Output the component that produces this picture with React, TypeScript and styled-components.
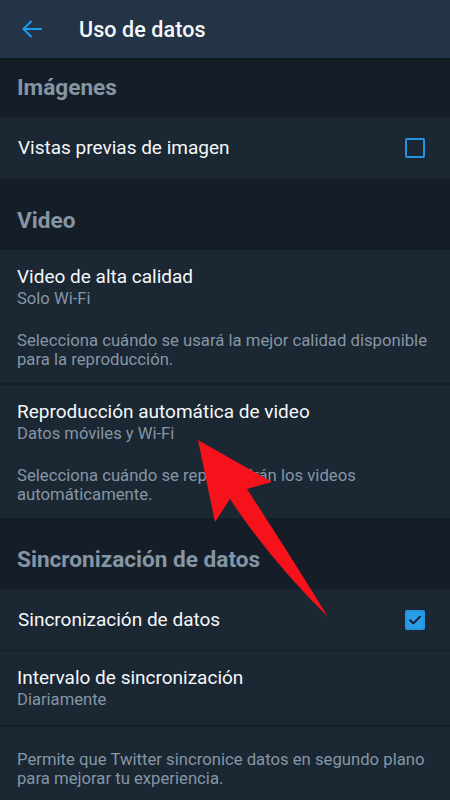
import React from 'react';
import styled, { createGlobalStyle } from 'styled-components';

const GlobalStyle = createGlobalStyle`
  html, body {
    margin: 0;
    padding: 0;
    background: #1b2733;
  }
  * {
    box-sizing: border-box;
  }
`;

const Screen = styled.div`
  position: relative;
  width: 450px;
  height: 800px;
  overflow: hidden;
  background: #1b2733;
  font-family: Roboto, 'Noto Sans', sans-serif;
`;

const TopBar = styled.header`
  height: 58px;
  display: flex;
  align-items: center;
  padding-left: 20px;
  background: #243447;
  box-shadow: 0 2px 3px rgba(0, 0, 0, 0.35);
  position: relative;
  z-index: 1;
`;

const BackButton = styled.button`
  width: 24px;
  height: 24px;
  padding: 0;
  border: none;
  background: none;
  display: flex;
  align-items: center;
  justify-content: center;
  margin-right: 35px;
`;

const TopTitle = styled.h1`
  margin: 0;
  font-size: 21.5px;
  font-weight: 500;
  color: #f5f8fa;
  letter-spacing: 0.1px;
`;

const SectionHeader = styled.div<{ $first?: boolean }>`
  background: #151e28;
  padding: ${({ $first }) => ($first ? '17px 17px 17px' : '29px 17px 17px')};
  font-size: 22.6px;
  font-weight: 700;
  line-height: 25px;
  color: #8595a3;
`;

const Row = styled.div<{ $divider?: boolean }>`
  background: #1b2733;
  padding: 16px 17px 14px 17px;
  border-bottom: ${({ $divider }) => ($divider ? '2px solid #151e28' : 'none')};
`;

const ToggleRow = styled.div<{ $divider?: boolean }>`
  background: #1b2733;
  height: 62px;
  display: flex;
  align-items: center;
  justify-content: space-between;
  padding: 0 25px 0 18px;
  border-bottom: ${({ $divider }) => ($divider ? '1px solid #151e28' : 'none')};
`;

const Title = styled.div`
  font-size: 19px;
  line-height: 22px;
  color: #f5f8fa;
`;

const Subtitle = styled.div`
  font-size: 16.6px;
  line-height: 22px;
  color: #8596a4;
`;

const Description = styled.p`
  margin: 21px 0 0;
  font-size: 16.7px;
  line-height: 19px;
  color: #8596a4;
`;

const Footer = styled.div`
  background: #1b2733;
  padding: 23px 17px 20px 17px;
`;

const FooterText = styled.p`
  margin: 0;
  font-size: 16.7px;
  line-height: 19px;
  color: #8596a4;
`;

const Box = styled.span<{ $checked?: boolean }>`
  width: 20px;
  height: 20px;
  border-radius: 2px;
  display: flex;
  align-items: center;
  justify-content: center;
  border: 2px solid #2394e0;
  background: ${({ $checked }) => ($checked ? '#2a9cea' : 'transparent')};
`;

const Pointer = styled.svg`
  position: absolute;
  left: 0;
  top: 0;
  pointer-events: none;
`;

const BackArrow = () => (
  <svg width="24" height="24" viewBox="0 0 24 24" fill="none">
    <path d="M21 12H4M11 4.5L3.5 12L11 19.5" stroke="#1d9bf0" strokeWidth="2" strokeLinecap="round" strokeLinejoin="round" />
  </svg>
);

const Checkbox: React.FC<{ checked?: boolean }> = ({ checked }) => (
  <Box $checked={checked}>
    {checked && (
      <svg width="14" height="14" viewBox="0 0 14 14" fill="none">
        <path d="M2 7.2L5.4 10.4L12 3.6" stroke="#15202b" strokeWidth="2" strokeLinecap="round" strokeLinejoin="round" />
      </svg>
    )}
  </Box>
);

export default function App() {
  return (
    <Screen>
      <GlobalStyle />
      <TopBar>
        <BackButton>
          <BackArrow />
        </BackButton>
        <TopTitle>Uso de datos</TopTitle>
      </TopBar>

      <SectionHeader $first>Imágenes</SectionHeader>
      <ToggleRow>
        <Title>Vistas previas de imagen</Title>
        <Checkbox />
      </ToggleRow>

      <SectionHeader>Video</SectionHeader>
      <Row $divider>
        <Title>Video de alta calidad</Title>
        <Subtitle>Solo Wi-Fi</Subtitle>
        <Description>
          Selecciona cuándo se usará la mejor calidad disponible para la reproducción.
        </Description>
      </Row>
      <Row>
        <Title>Reproducción automática de video</Title>
        <Subtitle>Datos móviles y Wi-Fi</Subtitle>
        <Description>Selecciona cuándo se reproducirán los videos automáticamente.</Description>
      </Row>

      <SectionHeader>Sincronización de datos</SectionHeader>
      <ToggleRow $divider>
        <Title>Sincronización de datos</Title>
        <Checkbox checked />
      </ToggleRow>
      <Row $divider>
        <Title>Intervalo de sincronización</Title>
        <Subtitle>Diariamente</Subtitle>
      </Row>
      <Footer>
        <FooterText>
          Permite que Twitter sincronice datos en segundo plano para mejorar tu experiencia.
        </FooterText>
      </Footer>

      {/* red call-out arrow drawn over the list */}
      <Pointer width="450" height="800" viewBox="0 0 450 800">
        <path
          d="M198 440 L272 482 L247 489 Q290 555 328 617 Q270 560 230 499 L215 522 Z"
          fill="#f5121a"
        />
      </Pointer>
    </Screen>
  );
}
